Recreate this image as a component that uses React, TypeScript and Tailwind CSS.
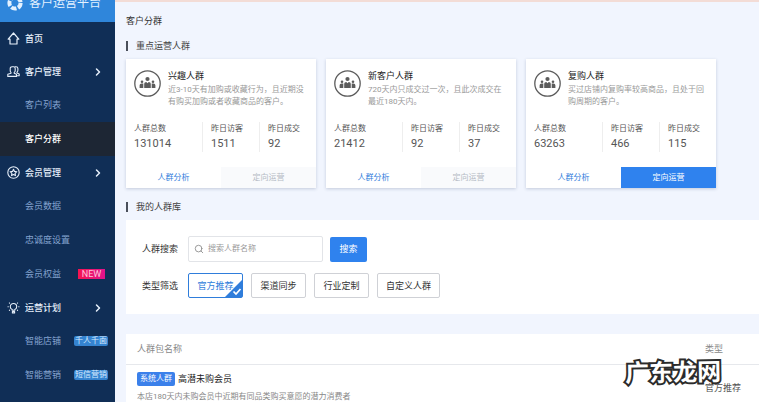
import { useState } from "react";
import type { ReactNode } from "react";
import { ChevronRight, Search } from "lucide-react";

const HomeIcon = () => (
  <svg viewBox="0 0 13 13" className="w-[13px] h-[13px]" fill="none" stroke="currentColor" strokeWidth="1.2" strokeLinejoin="round" strokeLinecap="round">
    <path d="M3 7.2H1.2L6.5 1l5.3 6.2H10V12H3z" />
  </svg>
);

const UsersIcon = () => (
  <svg viewBox="0 0 13 13" className="w-[13px] h-[13px]" fill="none" stroke="currentColor" strokeWidth="1.1" strokeLinejoin="round" strokeLinecap="round">
    <path d="M3.2 3.4c0-1 .8-1.600 1.800-1.600h1.600c1 0 1.600.6 1.600 1.600v2c0 .9-.4 1.600-1 2v.8l2.300 1v2.200H.8V9.200l3.200-1v-.8c-.5-.4-.8-1.100-.8-2z" />
    <path d="M8.200 1.800h.8c1.200 0 1.900.7 1.900 1.800v1.600c0 .9-.4 1.500-.9 1.900v.8l2.200 1v1.900h-2.400" />
  </svg>
);

const StarIcon = () => (
  <svg viewBox="0 0 13 13" className="w-[13px] h-[13px]" fill="none" stroke="currentColor" strokeWidth="1.1" strokeLinejoin="round">
    <circle cx="6.5" cy="6.5" r="5.7" />
    <path d="M6.5 3.3l1 2.1 2.3.3-1.7 1.6.4 2.3-2-1.1-2 1.1.4-2.3-1.7-1.6 2.3-.3z" />
  </svg>
);

const BulbIcon = () => (
  <svg viewBox="0 0 13 13" className="w-[13px] h-[13px]" fill="none" stroke="currentColor" strokeWidth="1.1" strokeLinecap="round" strokeLinejoin="round">
    <path d="M5.200 9.200V8.600C4 8 3.300 7 3.300 5.700a3.200 3.200 0 0 1 6.400 0C9.700 7 9 8 7.800 8.600v.6z" />
    <path d="M5.400 11.900V10.500h2.200v1.400zM1 5.700h.3M11.700 5.700h.3M2.400 2l.2.2M10.600 2l-.2.2M2.400 9.400l.2-.2M10.600 9.400l-.2-.2" />
  </svg>
);

const LogoIcon = () => (
  <svg viewBox="0 0 16 16" className="w-4 h-4" fill="none" stroke="currentColor">
    <circle cx="8" cy="8" r="5.6" strokeWidth="4" strokeDasharray="5.4 1.64" />
  </svg>
);

const CrowdIcon = () => (
  <svg viewBox="0 0 27 27" className="w-[27px] h-[27px] shrink-0 text-[#5c5c5c]" fill="currentColor">
    <circle cx="13.5" cy="13.5" r="12.7" fill="none" stroke="currentColor" strokeWidth="1.3" />
    <circle cx="13.5" cy="9" r="2.1" />
    <circle cx="8" cy="11.7" r="1.3" />
    <circle cx="19" cy="11.7" r="1.3" />
    <path d="M10.200 18v-3.800c0-1.300 1-2.200 2.100-2.200l1.200 1.300 1.200-1.300c1.200 0 2.100.9 2.100 2.200V18z" />
    <path d="M5.600 18v-2.400c0-1.200.9-2 2-2h1.700V18zM21.400 18v-2.400c0-1.200-.9-2-2-2h-1.700V18z" />
  </svg>
);

type NavItem = { name: string; icon?: ReactNode; arrow?: boolean; tag?: string };

const navItems: NavItem[] = [
  { name: "首页", icon: <HomeIcon /> },
  { name: "客户管理", icon: <UsersIcon />, arrow: true },
  { name: "客户列表" },
  { name: "客户分群" },
  { name: "会员管理", icon: <StarIcon />, arrow: true },
  { name: "会员数据" },
  { name: "忠诚度设置" },
  { name: "会员权益", tag: "NEW" },
  { name: "运营计划", icon: <BulbIcon />, arrow: true },
  { name: "智能店铺", tag: "千人千面" },
  { name: "智能营销", tag: "短信营销" },
];

const crowds = [
  { name: "兴趣人群", desc: "近3-10天有加购或收藏行为，且近期没有购买加购或者收藏商品的客户。", total: 131014, visitors: 1511, deals: 92, enabled: false },
  { name: "新客户人群", desc: "720天内只成交过一次，且此次成交在最近180天内。", total: 21412, visitors: 92, deals: 37, enabled: false },
  { name: "复购人群", desc: "买过店铺内复购率较高商品，且处于回购周期的客户。", total: 63263, visitors: 466, deals: 115, enabled: true },
];

const filters = ["官方推荐", "渠道同步", "行业定制", "自定义人群"];

function Sidebar() {
  const [active, setActive] = useState("客户分群");

  return (
    <aside className="w-[115px] shrink-0 bg-[#102e56] overflow-hidden">
      <div className="-mt-4 h-[38px] flex items-center gap-[6px] pl-[7px] bg-[#2f86db] text-[#e3f1ff]">
        <LogoIcon />
        <span className="text-[12px] whitespace-nowrap">客户运营平台</span>
      </div>
      <nav>
        {navItems.map(({ name, icon, arrow, tag }) => (
          <a
            key={name}
            href="#"
            onClick={() => setActive(name)}
            className={`flex items-center px-[7px] ${icon ? "h-[33px] text-[#e6effa]" : "h-[34px]"} ${
              active === name ? "bg-[#1d2634] text-white" : icon ? "" : "text-[#84a3cf]"
            } ${icon || active === name ? "font-medium" : ""}`}
          >
            <span className="w-[18px] shrink-0">{icon}</span>
            <span className="flex-1">{name}</span>
            {arrow && <ChevronRight className="w-3 h-3 mr-[4px]" strokeWidth={3} />}
            {tag === "NEW" && <span className="w-[27px] h-[10px] mr-[3px] flex items-center justify-center text-[#ffc4dc] bg-linear-to-r from-[#f5124f] to-[#e0128c]">{tag}</span>}
            {tag && tag !== "NEW" && <span className="h-[10px] flex items-center px-px text-[8px] text-[#d6ebff] bg-[#3583d0] rounded-xs">{tag}</span>}
          </a>
        ))}
      </nav>
    </aside>
  );
}

function SectionTitle({ children }: { children: ReactNode }) {
  return (
    <h2 className="flex items-center gap-2 h-[14px] text-[#444]">
      <span className="w-[2px] h-[10px] bg-[#4a4f5a]" />
      {children}
    </h2>
  );
}

function CrowdCard({ crowd }: { crowd: (typeof crowds)[number] }) {
  return (
    <article className="w-[190px] bg-white shadow-[0_1px_3px_rgba(60,80,120,0.25)]">
      <div className="flex gap-[7px] h-[61px] pt-[11px] px-2">
        <CrowdIcon />
        <div>
          <h3 className="leading-[12px] text-[#222]">{crowd.name}</h3>
          <p className="mt-[2px] text-[8px] leading-[12px] text-[#999]">{crowd.desc}</p>
        </div>
      </div>
      <dl className="flex h-[47px] pt-[2px] pl-2 text-[#555]">
        <div className="w-[68px]">
          <dt className="text-[8px] leading-[14px]">人群总数</dt>
          <dd className="text-[11px] leading-[16px]">{crowd.total}</dd>
        </div>
        <div className="w-[57px] h-[30px] pl-2 border-l border-[#eee]">
          <dt className="text-[8px] leading-[14px]">昨日访客</dt>
          <dd className="text-[11px] leading-[16px]">{crowd.visitors}</dd>
        </div>
        <div className="h-[30px] pl-2 border-l border-[#eee]">
          <dt className="text-[8px] leading-[14px]">昨日成交</dt>
          <dd className="text-[11px] leading-[16px]">{crowd.deals}</dd>
        </div>
      </dl>
      <div className="grid grid-cols-2 h-[21px] text-[8px]">
        <button className="text-[#2f7ddb]">人群分析</button>
        <button disabled={!crowd.enabled} className={crowd.enabled ? "bg-[#2f82ee] text-white" : "bg-[#f9fafc] text-[#b5bac4]"}>
          定向运营
        </button>
      </div>
    </article>
  );
}

function App() {
  const [keyword, setKeyword] = useState("");
  const [filter, setFilter] = useState("官方推荐");

  return (
    <div className="relative h-screen flex overflow-hidden bg-[#f1f5fe] font-['Roboto','Noto_Sans_CJK_SC',sans-serif] text-[9px] leading-[14px] text-[#333]">
      <Sidebar />

      <main className="flex-1 min-w-0 overflow-hidden border-t-2 border-[#f3dcd6]">
        <div className="pl-[11px]">
          <h1 className="mt-3">客户分群</h1>
          <div className="mt-[11px]">
            <SectionTitle>重点运营人群</SectionTitle>
          </div>
          <div className="mt-[6px] flex gap-[10px]">
            {crowds.map((crowd) => (
              <CrowdCard key={crowd.name} crowd={crowd} />
            ))}
          </div>

          <div className="mt-3">
            <SectionTitle>我的人群库</SectionTitle>
          </div>
          <section className="mt-[6px] p-4 bg-white">
            <form className="flex items-center h-[26px]" onSubmit={(e) => e.preventDefault()}>
              <label htmlFor="keyword" className="w-[46px]">人群搜索</label>
              <div className="flex items-center gap-1 w-[135px] h-[26px] px-[5px] border border-[#e2e4e8] rounded-xs">
                <Search className="w-[10px] h-[10px] text-[#888]" />
                <input
                  id="keyword"
                  className="flex-1 min-w-0 text-[8px] outline-none placeholder:text-[#999]"
                  placeholder="搜索人群名称"
                  value={keyword}
                  onChange={(e) => setKeyword(e.target.value)}
                />
              </div>
              <button className="ml-[7px] w-[37px] h-[25px] bg-[#2f82ee] text-white rounded-xs">搜索</button>
            </form>
            <div className="mt-[11px] flex items-center">
              <span className="w-[46px]">类型筛选</span>
              <div className="flex gap-2">
                {filters.map((name) => (
                  <button
                    key={name}
                    aria-pressed={filter === name}
                    onClick={() => setFilter(name)}
                    className={`relative min-w-[55px] h-[25px] px-2 border rounded-xs ${filter === name ? "border-[#2f7ddb] text-[#2f7ddb]" : "border-[#cfd1d6]"}`}
                  >
                    {name}
                    {filter === name && (
                      <svg viewBox="0 0 17 17" className="absolute right-0 bottom-0 w-[17px] h-[17px]">
                        <path d="M17 0v17H0z" fill="#2f7ddb" />
                        <path d="M8.500 11.500l2.500 2.500 4.500-5" fill="none" stroke="#fff" strokeWidth="1.700" />
                      </svg>
                    )}
                  </button>
                ))}
              </div>
            </div>
          </section>

          <section className="mt-5 bg-white">
            <table className="w-full text-left">
              <thead>
                <tr className="h-[30px] border-b border-[#e6e8ec] text-[#888]">
                  <th className="pl-[11px] font-normal">人群包名称</th>
                  <th className="w-[54px] font-normal">类型</th>
                </tr>
              </thead>
              <tbody>
                <tr className="h-[48px]">
                  <td className="pl-[11px]">
                    <div className="flex items-center gap-[3px] text-[#222]">
                      <span className="h-[14px] px-[3px] flex items-center text-[8px] bg-[#3b80ea] text-white rounded-xs">系统人群</span>
                      高潜未购会员
                    </div>
                    <p className="mt-[4px] text-[8px] text-[#888]">本店180天内未购会员中近期有同品类购买意愿的潜力消费者</p>
                  </td>
                  <td className="text-[#555]">官方推荐</td>
                </tr>
              </tbody>
            </table>
          </section>
        </div>
      </main>

      <div className="absolute right-[38px] bottom-[14px] -rotate-1 text-[24px] leading-[30px] font-bold text-white [-webkit-text-stroke:4px_#2b2b2b] [paint-order:stroke_fill] pointer-events-none">
        广东龙网
      </div>
    </div>
  );
}

export default App;
